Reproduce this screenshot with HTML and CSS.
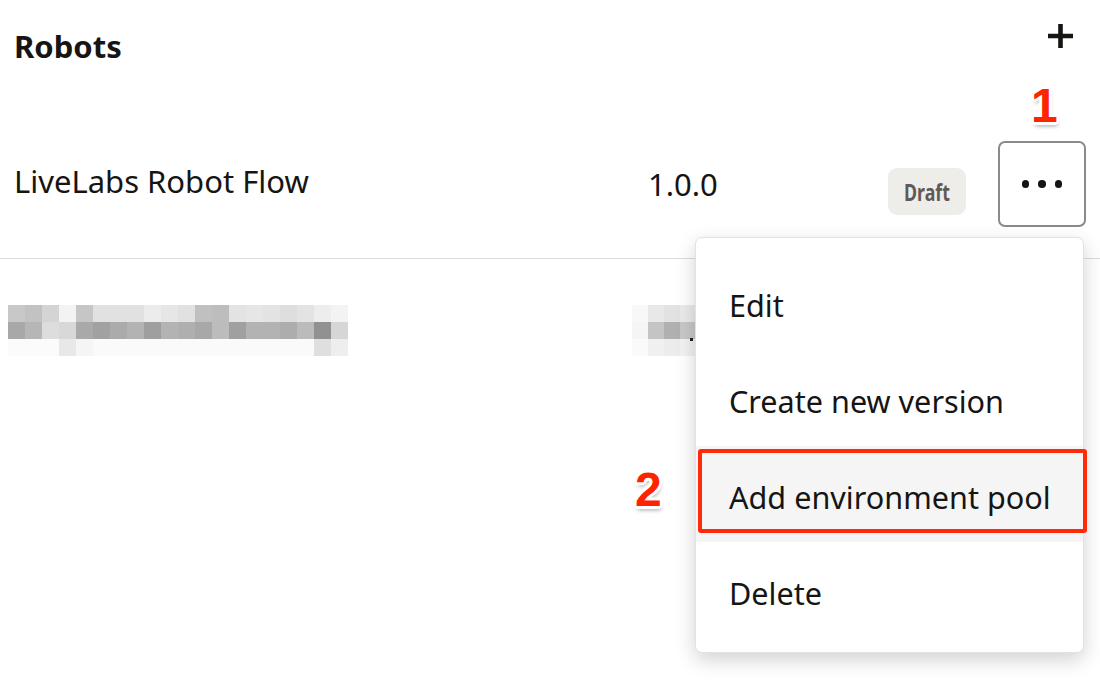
FILE: index.html
```html
<!DOCTYPE html>
<html lang="en">
<head>
<meta charset="utf-8">
<title>Robots</title>
<link rel="stylesheet" href="styles.css">
</head>
<body>
<div class="page">
  <header class="header">
    <h1 class="title">Robots</h1>
    <button class="add" aria-label="Add">
      <svg width="25" height="24" viewBox="0 0 25 24"><path d="M12.5 0V24M0 12H25" stroke="#161513" stroke-width="4.6" fill="none"/></svg>
    </button>
  </header>

  <div class="row row-main">
    <div class="name">LiveLabs Robot Flow</div>
    <div class="version">1.0.0</div>
    <div class="status"><span class="badge"><span class="badge-text">Draft</span></span></div>
    <div class="actions">
      <button class="more" aria-label="More actions"><span class="dot"></span><span class="dot"></span><span class="dot"></span></button>
    </div>
  </div>

  <div class="row row-blur">
    <div class="blur blur-name"></div>
    <div class="blur blur-version"><span class="period"></span></div>
  </div>

  <ul class="menu">
    <li class="menu-item">Edit</li>
    <li class="menu-item">Create new version</li>
    <li class="menu-item is-active">Add environment pool</li>
    <li class="menu-item">Delete</li>
  </ul>

  <div class="callout"></div>
  <span class="step step-1">1</span>
  <span class="step step-2">2</span>
</div>
</body>
</html>
```
FILE: styles.css
```css
* { box-sizing: border-box; }
html, body { margin: 0; padding: 0; background: #fff; }
body {
  font-family: "Noto Sans", "Open Sans", sans-serif;
  color: #161513;
}
.page {
  position: relative;
  width: 1100px;
  height: 682px;
  overflow: hidden;
}
.header {
  height: 95px;
  display: flex;
  justify-content: space-between;
  align-items: flex-start;
  padding: 0 27px 0 14px;
}
.title {
  margin: 0;
  padding-top: 31px;
  font-size: 31px;
  line-height: 31px;
  font-weight: 700;
}
.add {
  margin-top: 24px;
  padding: 0;
  border: 0;
  background: none;
  width: 25px;
  height: 24px;
  display: block;
}
.add svg { display: block; }

.row-main {
  display: grid;
  grid-template-columns: 634px 240px 110px 88px;
  align-items: center;
  padding: 46px 14px 31px;
  border-bottom: 1px solid #dcdcdc;
}
.name {
  font-size: 31px;
  line-height: 31px;
  padding-bottom: 6px;
}
.version {
  font-size: 31px;
  line-height: 31px;
}
.status { display: flex; }
.badge {
  width: 78px;
  height: 47px;
  margin-top: 15px;
  border-radius: 9px;
  background: #efedea;
  display: flex;
  align-items: center;
  justify-content: center;
}
.badge-text {
  display: inline-block;
  font-size: 24px;
  line-height: 1;
  font-weight: 700;
  color: #5f5a55;
  transform: scaleX(0.74);
}
.more {
  width: 88px;
  height: 86px;
  border: 2px solid #8a8a8a;
  border-radius: 7px;
  background: #fff;
  padding: 0;
  display: flex;
  align-items: center;
  justify-content: center;
  gap: 9px;
}
.dot {
  width: 7.5px;
  height: 7.5px;
  border-radius: 50%;
  background: #161513;
}

.row-blur {
  display: flex;
  padding-top: 46px;
}
.blur {
  height: 51px;
  background-repeat: no-repeat;
}
.blur-name {
  margin-left: 8px;
  width: 340px;
  background-size: 340px 17px;
  background-position: 0 0, 0 17px, 0 34px;
  background-image:
    linear-gradient(to right, #c8c8c8 0 17px, #c2c2c2 17px 34px, #d4d4d4 34px 51px, #f3f3f3 51px 68px, #c6c6c6 68px 85px, #e1e1e1 85px 136px, #ececec 136px 153px, #e6e6e6 153px 170px, #e1e1e1 170px 187px, #c0c0c0 187px 204px, #bdbdbd 204px 221px, #e3e3e3 221px 238px, #e6e6e6 238px 255px, #e3e3e3 255px 272px, #dedede 272px 289px, #e3e3e3 289px 306px, #ededed 306px 323px, #f3f3f3 323px 340px),
    linear-gradient(to right, #a8a8a8 0 17px, #b6b6b6 17px 34px, #dddddd 34px 51px, #d8d8d8 51px 68px, #a9a9a9 68px 85px, #a1a1a1 85px 102px, #ababab 102px 119px, #b3b3b3 119px 136px, #9f9f9f 136px 153px, #b3b3b3 153px 170px, #afafaf 170px 187px, #a8a8a8 187px 204px, #bcbcbc 204px 221px, #a0a0a0 221px 238px, #b3b3b3 238px 272px, #adadad 272px 289px, #bbbbbb 289px 306px, #919191 306px 323px, #d6d6d6 323px 340px),
    linear-gradient(to right, #fbfbfb 0 51px, #e8e8e8 51px 68px, #f5f5f5 68px 85px, #fafafa 85px 306px, #dfdfdf 306px 323px, #eeeeee 323px 340px);
}
.blur-version {
  position: relative;
  margin-left: 284px;
  width: 64px;
  background-size: 64px 17px;
  background-position: 0 0, 0 17px, 0 34px;
  background-image:
    linear-gradient(to right, #f8f8f8 0 16px, #e8e8e8 16px 32px, #e2e2e2 32px 48px, #eaeaea 48px 64px),
    linear-gradient(to right, #f5f5f5 0 16px, #c4c4c4 16px 32px, #b0b0b0 32px 48px, #c8c8c8 48px 64px),
    linear-gradient(to right, #fafafa 0 16px, #f0f0f0 16px 32px, #ececec 32px 48px, #f2f2f2 48px 64px);
}
.period {
  position: absolute;
  left: 58px;
  top: 33px;
  width: 3px;
  height: 3px;
  background: #222;
}

.menu {
  position: absolute;
  left: 695px;
  top: 237px;
  width: 389px;
  height: 416px;
  margin: 0;
  padding: 16px 0 15px;
  list-style: none;
  background: #fff;
  border: 1px solid #e2e2e2;
  border-radius: 7px;
  box-shadow: 0 7px 20px rgba(0, 0, 0, 0.18);
}
.menu-item {
  height: 96px;
  padding: 6px 0 0 33px;
  display: flex;
  align-items: center;
  font-size: 30.6px;
  line-height: 31px;
}
.menu-item.is-active { background: #f5f5f5; }

.callout {
  position: absolute;
  left: 698px;
  top: 449px;
  width: 389px;
  height: 84px;
  border: 4px solid #ff2a0a;
  border-radius: 3px;
}
.step {
  position: absolute;
  font-family: "Liberation Sans", Arial, sans-serif;
  font-weight: 700;
  font-size: 48px;
  line-height: 48px;
  color: #ff2400;
  text-shadow:
    3px 0 0 #fff, -3px 0 0 #fff, 0 3px 0 #fff, 0 -3px 0 #fff,
    2px 2px 0 #fff, -2px 2px 0 #fff, 2px -2px 0 #fff, -2px -2px 0 #fff,
    1px 4px 4px rgba(0, 0, 0, 0.35);
}
.step-1 { left: 1031px; top: 82px; }
.step-2 { left: 635px; top: 466px; }
```
